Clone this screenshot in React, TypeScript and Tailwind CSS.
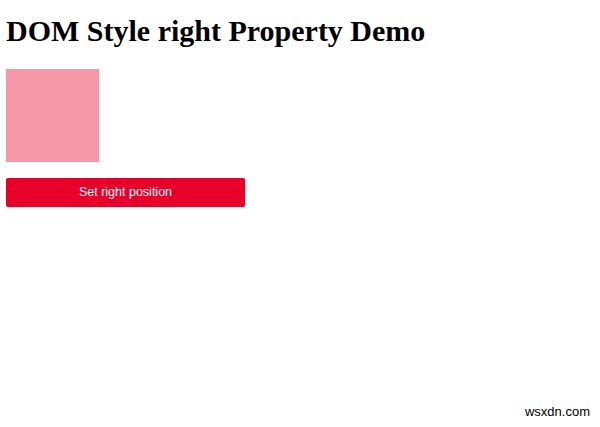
import React from "react";

export default function App() {
  return (
    <div className="relative w-[600px] h-[427px] bg-white overflow-hidden">
      <div className="px-[6px] pt-[15px]">
        <h1
          className="text-[30px] leading-[32px] font-bold text-black"
          style={{ fontFamily: '"Liberation Serif", "Times New Roman", serif' }}
        >
          DOM Style right Property Demo
        </h1>
        <div className="mt-[22px] w-[93px] h-[93px] bg-[#f599a9]" />
        <button
          className="mt-[16px] w-[239px] h-[29px] rounded-[2px] bg-[#e8002b] text-white text-[12.5px] flex items-center justify-center"
          style={{ fontFamily: '"Liberation Sans", Arial, sans-serif' }}
        >
          Set right position
        </button>
      </div>
      <div
        className="absolute right-[10px] bottom-[6px] text-[13px] text-black"
        style={{ fontFamily: '"Liberation Sans", Arial, sans-serif' }}
      >
        wsxdn.com
      </div>
    </div>
  );
}
